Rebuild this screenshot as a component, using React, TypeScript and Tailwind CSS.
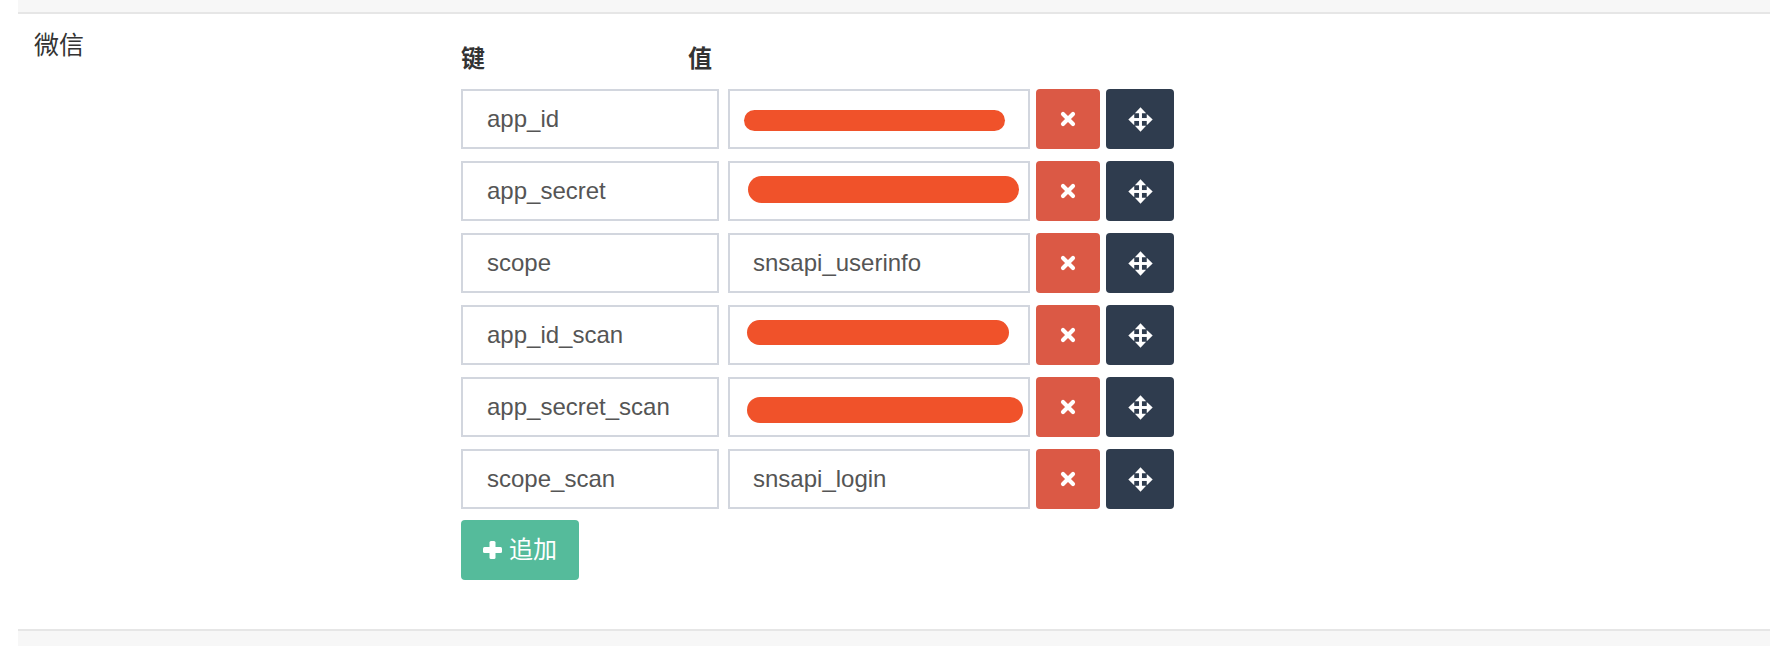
import React from 'react';

interface Pair {
	name: string;
	value: string;
	// redaction stroke over a secret value: left, top, width, height (px inside the box)
	mark?: [number, number, number, number];
}

const pairs: Pair[] = [
	{ name: 'app_id', value: '', mark: [14, 19, 261, 21] },
	{ name: 'app_secret', value: '', mark: [18, 13, 271, 27] },
	{ name: 'scope', value: 'snsapi_userinfo' },
	{ name: 'app_id_scan', value: '', mark: [17, 13, 262, 25] },
	{ name: 'app_secret_scan', value: '', mark: [17, 18, 276, 26] },
	{ name: 'scope_scan', value: 'snsapi_login' },
];

const cjk = "font-['Liberation_Sans','Noto_Sans_CJK_SC',sans-serif]";

function TimesIcon() {
	return (
		<svg width="16" height="16" viewBox="0 0 16 16">
			<path d="M3 3 L13 13 M13 3 L3 13" stroke="white" strokeWidth="4.2" strokeLinecap="round" />
		</svg>
	);
}

function MoveIcon() {
	return (
		<svg width="25" height="25" viewBox="0 0 24 24" fill="white">
			<rect x="10.6" y="4" width="2.8" height="16" />
			<rect x="4" y="10.6" width="16" height="2.8" />
			<path d="M12 0.3 L6.6 6 L17.4 6 Z" />
			<path d="M12 23.7 L6.6 18 L17.4 18 Z" />
			<path d="M0.3 12 L6 6.6 L6 17.4 Z" />
			<path d="M23.7 12 L18 6.6 L18 17.4 Z" />
		</svg>
	);
}

function PlusIcon() {
	return (
		<svg width="19" height="18" viewBox="0 0 19 18" fill="white">
			<rect x="0" y="6" width="19" height="6" rx="1.5" />
			<rect x="6.5" y="0" width="6" height="18" rx="1.5" />
		</svg>
	);
}

function Row({ name, value, mark }: Pair) {
	return (
		<div className="flex h-[60px]">
			<div className="flex items-center w-[258px] h-[60px] border-2 border-[#d2d6de] pl-6 text-[24px] text-[#555]">
				{name}
			</div>
			<div className="relative flex items-center w-[302px] h-[60px] ml-[9px] border-2 border-[#d2d6de] pl-[23px] text-[24px] text-[#555]">
				{value}
				{mark && (
					<div
						className="absolute rounded-full bg-[#f0522a]"
						style={{ left: mark[0], top: mark[1], width: mark[2], height: mark[3] }}
					/>
				)}
			</div>
			<button className="flex items-center justify-center w-[64px] h-[60px] ml-[6px] rounded-[4px] bg-[#db5945]">
				<TimesIcon />
			</button>
			<button className="flex items-center justify-center w-[68px] h-[60px] ml-[6px] rounded-[4px] bg-[#2f3c4e]">
				<MoveIcon />
			</button>
		</div>
	);
}

export default function App() {
	return (
		<div className={`w-[1770px] h-[646px] bg-white pl-[18px] overflow-hidden ${cjk}`}>
			<div className="h-full bg-[#f7f7f7] pt-[12px]">
				<div className="flex h-[619px] bg-white border-y-2 border-[#e6e6e6]">
					<div className="w-[443px] pl-[16px] pt-[13px] text-[25px] leading-[37px] text-[#333]">
						微信
					</div>
					<div className="pt-[28px]">
						<div className="flex h-[34px] mb-[13px] text-[24px] leading-[34px] font-bold text-[#333]">
							<span className="w-[227px]">键</span>
							<span>值</span>
						</div>
						<div className="flex flex-col gap-[12px]">
							{pairs.map((p) => (
								<Row key={p.name} {...p} />
							))}
						</div>
						<button className="flex items-center mt-[11px] h-[60px] w-[118px] pl-[22px] rounded-[4px] bg-[#55bb9b] text-white text-[24px]">
							<PlusIcon />
							<span className="ml-[7px]">追加</span>
						</button>
					</div>
				</div>
			</div>
		</div>
	);
}
